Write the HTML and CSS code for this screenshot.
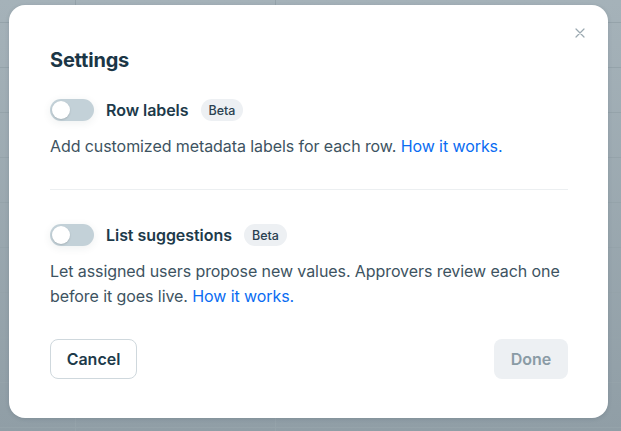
FILE: index.html
```html
<!DOCTYPE html>
<html>
<head>
<meta charset="utf-8">
<link rel="stylesheet" href="styles.css">
</head>
<body>
<div class="backdrop">
  <div class="modal">
    <button class="close" aria-label="Close">
      <svg width="10" height="10" viewBox="0 0 10 10"><path d="M1 1L9 9M9 1L1 9" stroke="#9aa8b0" stroke-width="1.2" fill="none" stroke-linecap="round"/></svg>
    </button>
    <h2 class="title">Settings</h2>
    <section class="setting">
      <div class="setting-head">
        <span class="toggle"><span class="knob"></span></span>
        <span class="label">Row labels</span>
        <span class="badge">Beta</span>
      </div>
      <p class="desc">Add customized metadata labels for each row. <a class="link" href="#">How it works.</a></p>
    </section>
    <hr class="divider">
    <section class="setting second">
      <div class="setting-head">
        <span class="toggle"><span class="knob"></span></span>
        <span class="label">List suggestions</span>
        <span class="badge">Beta</span>
      </div>
      <p class="desc desc-two">Let assigned users propose new values. Approvers review each one before it goes live. <a class="link" href="#">How it works.</a></p>
    </section>
    <div class="actions">
      <button class="btn cancel">Cancel</button>
      <button class="btn done" disabled>Done</button>
    </div>
  </div>
</div>
</body>
</html>
```
FILE: styles.css
```css
* { box-sizing: border-box; }
html, body { margin: 0; padding: 0; }
body {
  width: 621px;
  height: 431px;
  overflow: hidden;
  font-family: Inter, "Noto Sans", sans-serif;
  background-color: #a1aeb5;
  background-image:
    linear-gradient(to right, transparent 75px, #95a3aa 75px, #95a3aa 76px, transparent 76px),
    linear-gradient(to right, transparent 275px, #95a3aa 275px, #95a3aa 276px, transparent 276px),
    repeating-linear-gradient(to bottom, transparent 0, transparent 22px, #95a3aa 22px, #95a3aa 23px, transparent 23px, transparent 45px),
    linear-gradient(to bottom, #a5b2b9, #909ea6);
}
.backdrop {
  padding: 5px 13px 13px 9px;
}
.modal {
  position: relative;
  width: 599px;
  height: 413px;
  background: #fff;
  border-radius: 16px;
  padding: 41px 40px 39px 41px;
  box-shadow: 0 1px 4px rgba(30, 50, 60, 0.15);
  display: flex;
  flex-direction: column;
}
.close {
  position: absolute;
  top: 18px;
  right: 18px;
  width: 20px;
  height: 20px;
  border: 0;
  background: none;
  padding: 0;
  display: flex;
  align-items: center;
  justify-content: center;
}
.title {
  margin: 0;
  font-size: 20px;
  line-height: 28px;
  font-weight: 700;
  color: #1b3646;
  letter-spacing: -0.2px;
}
.setting { margin-top: 25px; }
.setting.second { margin-top: 34px; }
.setting-head {
  display: flex;
  align-items: center;
  height: 22px;
}
.toggle {
  width: 44px;
  height: 22px;
  border-radius: 11px;
  background: #c3d1d8;
  position: relative;
  box-shadow: 0 2px 8px rgba(40, 60, 70, 0.08);
}
.knob {
  position: absolute;
  left: 2px;
  top: 2px;
  width: 18px;
  height: 18px;
  border-radius: 50%;
  background: #fff;
  box-shadow: 0 1px 2px rgba(0, 0, 0, 0.15);
}
.label {
  margin-left: 12px;
  font-size: 16px;
  font-weight: 600;
  color: #1d3a4a;
  letter-spacing: -0.05px;
}
.badge {
  margin-left: 12px;
  height: 22px;
  padding: 0 8px;
  border-radius: 11px;
  background: #edf0f3;
  font-size: 12.5px;
  font-weight: 500;
  color: #2a4150;
  display: flex;
  align-items: center;
}
.desc {
  margin: 13px 0 0;
  font-size: 16px;
  line-height: 25px;
  color: #3d5361;
  letter-spacing: -0.08px;
}
.desc-two { margin-top: 13px; }
.link { color: #0a6cf2; text-decoration: none; }
.divider {
  margin: 30px 0 0;
  border: 0;
  height: 1px;
  background: #eceff1;
}
.actions {
  margin-top: auto;
  display: flex;
  justify-content: space-between;
}
.btn {
  height: 40px;
  border-radius: 8px;
  font-family: inherit;
  font-size: 16px;
  font-weight: 600;
  padding: 0;
}
.cancel {
  width: 87px;
  background: #fff;
  border: 1px solid #cfd8dd;
  color: #1d3a4a;
}
.done {
  width: 74px;
  background: #edf0f3;
  border: 0;
  color: #8a9ba5;
}
```
